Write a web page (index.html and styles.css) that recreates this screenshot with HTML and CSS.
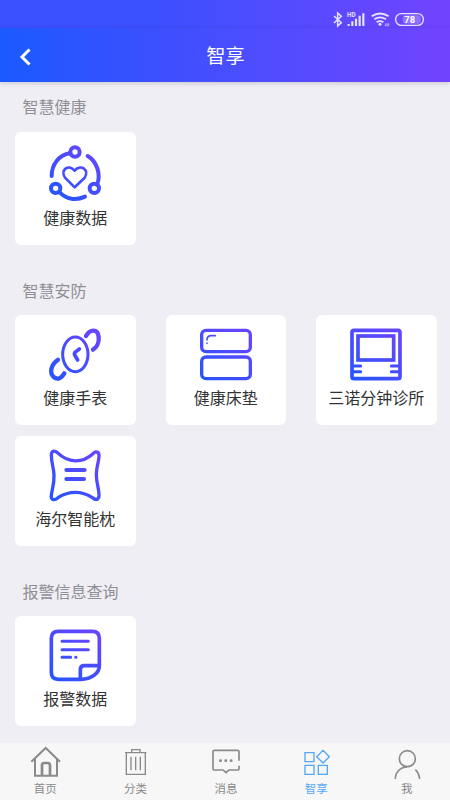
FILE: index.html
```html
<!DOCTYPE html>
<html lang="zh-CN">
<head>
<meta charset="utf-8">
<title>智享</title>
<link rel="stylesheet" href="styles.css">
</head>
<body>
<svg class="defs" width="0" height="0">
  <defs>
    <linearGradient id="g1" gradientUnits="userSpaceOnUse" x1="130" y1="220" x2="245" y2="65"><stop offset="0" stop-color="#2355ff"/><stop offset="1" stop-color="#6645ff"/></linearGradient>
  </defs>
</svg>
<div class="status">
  <svg width="96" height="20" viewBox="0 0 288 60" fill="none" stroke="#e6e2ff" stroke-width="5">
    <path d="M6 21L28 41L17 51V12L28 22L6 42" stroke-width="4.5"/>
    <path d="M50 45v6M61 37v14M72 29v22M83 20v31M94 13v38" stroke-width="6.5"/>
    <path d="M119 22Q144 5 170 22M127 31Q144 19 162 31M134 40Q144 33 154 40" stroke-width="5.5"/>
    <circle cx="144" cy="46" r="4.5" fill="#e6e2ff" stroke="none"/>
    <path d="M162 43v8m-3-3 3 4M168 53v-9m3 3-3-4" stroke-width="2.5"/>
    <rect x="191" y="14" width="83" height="35" rx="17" stroke-width="4"/>
    <rect x="212" y="19" width="54" height="25" rx="9" fill="#a38bff" fill-opacity=".65" stroke="none"/>
    <text class="hd" x="45" y="25">HD</text>
    <text class="battery" x="233" y="42" text-anchor="middle">78</text>
  </svg>
</div>
<header class="header">
  <svg class="back" width="12" height="20" viewBox="0 0 12 20"><path d="M10.5 2.5L3 10L10.5 17.5" fill="none" stroke="#fff" stroke-width="3"/></svg>
  <h1>智享</h1>
</header>
<main>
  <h2 class="first-title">智慧健康</h2>
  <section class="grid">
    <div class="card tall">
      <svg class="icon" viewBox="106 51 180 180">
        <g stroke-width="12">
          <circle cx="196" cy="81" r="14"/><circle cx="138" cy="190" r="14"/><circle cx="254" cy="190" r="14"/>
          <path d="M182 84C146 90 126 120 126 153M234 93C261 109 275 146 262 180M149 201C170 224 200 227 226 215"/>
        </g>
        <path stroke-width="8" d="M195 187L166 158C151 136 176 115 195 137C214 115 240 136 225 158Z"/>
      </svg>
      <span>健康数据</span>
    </div>
  </section>
  <h2 class="security-title">智慧安防</h2>
  <section class="grid">
    <div class="card">
      <svg class="icon" viewBox="106 45 180 180">
        <ellipse cx="197" cy="133" rx="38" ry="52" stroke-width="9"/>
        <path stroke-width="13" d="M229 78C240 58 264 54 267 81C269 99 260 113 250 119M145 149C123 164 119 189 132 201C144 211 156 204 164 190"/>
        <path stroke-width="11" d="M209 117L195 128Q193 131 195 135L204 150"/>
      </svg>
      <span>健康手表</span>
    </div>
    <div class="card">
      <svg class="icon" viewBox="108 45 180 180">
        <rect x="125" y="61" width="146" height="64" rx="13" stroke-width="10"/>
        <rect x="125" y="141" width="146" height="65" rx="13" stroke-width="10"/>
        <path stroke-width="5" d="M166 77H154Q141 77 141 90M141 99v1"/>
      </svg>
      <span>健康床垫</span>
    </div>
    <div class="card">
      <svg class="icon" viewBox="109 45 180 180">
        <rect x="127" y="61" width="144" height="145" rx="6" stroke-width="11"/>
        <rect x="145" y="78" width="107" height="72" stroke-width="11" stroke-linejoin="miter"/>
        <path stroke-width="9" d="M130 168H153M130 185H153M245 168H268M245 185H268"/>
      </svg>
      <span>三诺分钟诊所</span>
    </div>
    <div class="card">
      <svg class="icon" viewBox="106 48 180 180">
        <path stroke-width="10" d="M143 68C176 100 218 100 250 71C258 62 269 65 268 79C266 103 260 112 260 134C260 161 269 176 268 197C267 211 258 211 248 203C216 182 178 182 145 203C132 214 123 209 125 195C128 174 134 161 133 135C132 112 125 98 125 76C125 63 133 60 143 68Z"/>
        <path stroke-width="12" d="M170 120H225M170 147H223"/>
      </svg>
      <span>海尔智能枕</span>
    </div>
  </section>
  <h2 class="alarm-title">报警信息查询</h2>
  <section class="grid">
    <div class="card">
      <svg class="icon" viewBox="106 48 180 180">
        <path stroke-width="11" d="M269 167V85Q269 64 248 64H146Q125 64 125 85V187Q125 208 146 208H213C246 207 269 190 269 167H224Q212 167 212 179V206"/>
        <path stroke-width="9" d="M157 94H236M157 119H236M157 142H183M198 142h1"/>
      </svg>
      <span>报警数据</span>
    </div>
  </section>
</main>
<nav class="tabs">
  <a><svg viewBox="90 30 96 96"><path stroke-width="6" d="M94 80L137 39L180 80M105 72V122H171V72"/><path stroke-width="8" d="M126 120V91Q126 84 133 84H143Q150 84 150 91V120"/></svg><span>首页</span></a>
  <a><svg viewBox="360 30 96 96"><path stroke-width="4" d="M375 53H439M379 54V118H436V54M395 52V44H420V52M393 65V106M407 65V106M421 65V106"/></svg><span>分类</span></a>
  <a><svg viewBox="60 30 96 96"><path stroke-width="5" d="M147 77V50Q147 46 143 46H73Q69 46 69 50V101Q69 105 73 105H99L108 113L117 105H143Q147 105 147 101V92"/><path stroke-width="8" stroke-linecap="round" d="M91 77h1M107 77h1M123 77h1"/></svg><span>消息</span></a>
  <a class="active"><svg viewBox="331 30 96 96"><path stroke-width="4" d="M343 53H370V80H343ZM343 91H370V118H343ZM383 91H410V118H383ZM397 46L416 65L397 84L378 65Z"/></svg><span>智享</span></a>
  <a><svg viewBox="151 30 96 96"><circle cx="200" cy="71" r="24" stroke-width="5"/><path stroke-width="5" d="M164 132C164 111 178 97 199 96M224 104Q235 114 237 132"/></svg><span>我</span></a>
</nav>
</body>
</html>
```
FILE: styles.css
```css
* { box-sizing: border-box; }
body {
  margin: 0;
  width: 450px;
  height: 800px;
  overflow: hidden;
  display: flex;
  flex-direction: column;
  background: #efeef4;
  font-family: "Noto Sans CJK SC", sans-serif;
}
.defs { position: absolute; }
.status {
  height: 28px;
  flex: none;
  display: flex;
  justify-content: flex-end;
  padding: 9px 22px 0 0;
  background: linear-gradient(90deg, #3b50ff, #3b50ff 33%, #474eff 50%, #7243ff);
}
.hd { font: 700 19px Roboto, sans-serif; fill: #e6e2ff; stroke: none; }
.battery { font: 700 28px Roboto, sans-serif; fill: #fff; stroke: none; }
.header {
  height: 53.5px;
  flex: none;
  display: grid;
  grid-template-columns: 50px 1fr 50px;
  align-items: center;
  background: linear-gradient(90deg, #1a5aff, #3b50ff 33%, #474eff 50%, #7243ff);
  box-shadow: 0 1px 5px rgba(0, 0, 0, .18);
}
.back { margin: 4px 0 0 19px; }
h1 {
  margin: 0;
  padding-left: 1px;
  color: #fff;
  font-size: 19.2px;
  font-weight: 400;
  line-height: 28px;
  text-align: center;
}
main { flex: 1; padding: 0 13px 0 15px; }
h2 {
  margin: 0 0 0 7.5px;
  color: #8f8e94;
  font-size: 16px;
  font-weight: 400;
  line-height: 24px;
}
.first-title { padding: 12.5px 0 14px; }
.security-title { padding: 33px 0 13px; }
.alarm-title { padding: 33px 0 13px; }
.grid {
  display: grid;
  grid-template-columns: repeat(3, 120.5px);
  gap: 11px 30px;
}
.card {
  height: 110px;
  display: flex;
  flex-direction: column;
  align-items: center;
  padding-top: 10px;
  border-radius: 6px;
  background: #fff;
  color: #333;
  font-size: 16px;
  line-height: 24px;
}
.card span { margin-top: -0.5px; }
.card.tall { height: 113px; }
.card.tall span { margin-top: 3px; }
.icon {
  width: 60px;
  height: 60px;
  flex: none;
  fill: none;
  stroke: url(#g1);
  stroke-linecap: round;
  stroke-linejoin: round;
}
.tabs {
  height: 57px;
  flex: none;
  display: grid;
  grid-template-columns: repeat(5, 90.4px);
  background: #f7f7f7;
}
.tabs a {
  display: flex;
  flex-direction: column;
  align-items: center;
  padding-top: 2px;
  color: #8a8a8a;
  font-size: 11.5px;
  line-height: 17px;
}
.tabs svg {
  width: 32px;
  height: 32px;
  margin-left: 1px;
  fill: none;
  stroke: currentColor;
  overflow: visible;
}
.tabs span { margin-top: 2.5px; }
.tabs .active { color: #55a8f5; }
```
